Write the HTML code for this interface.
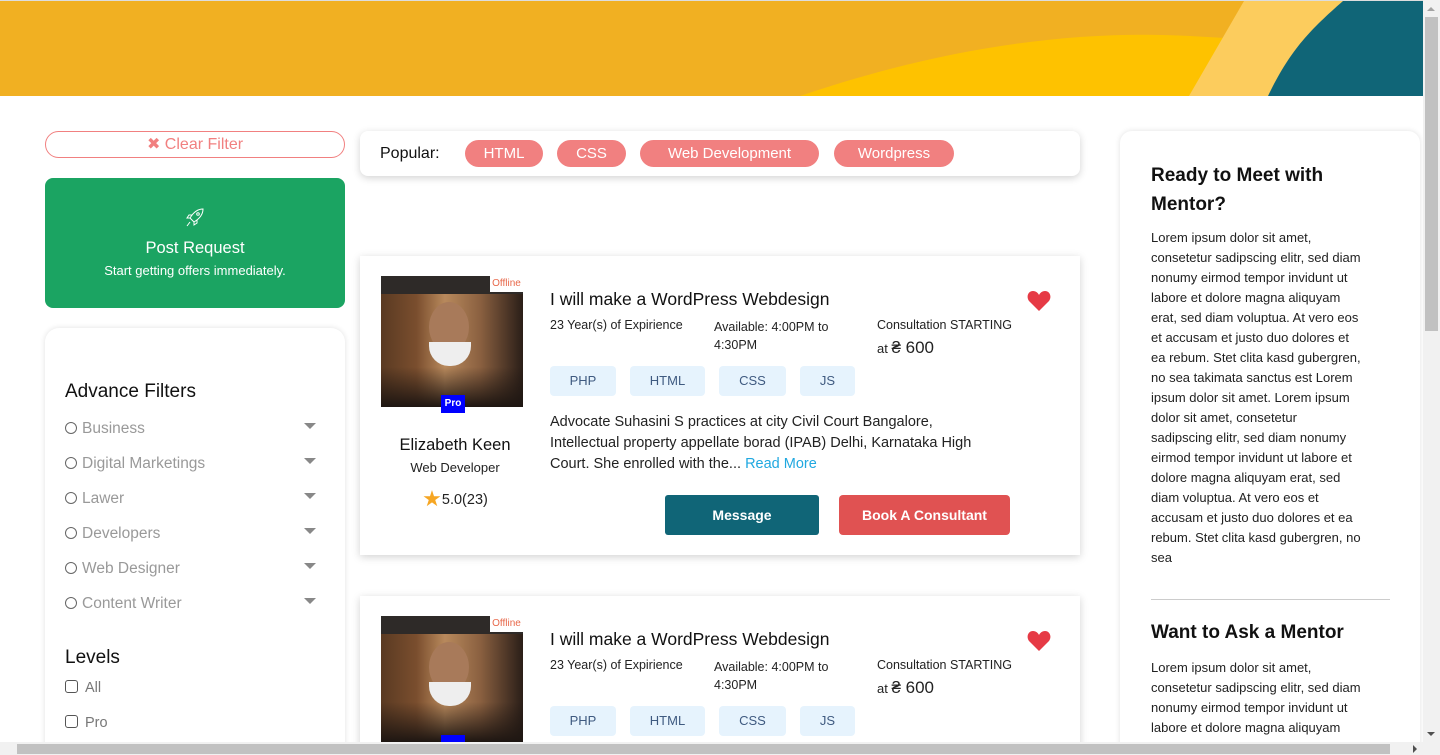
<!DOCTYPE html>
<html style="overflow:hidden;width:1440px;height:755px"><head><meta charset="utf-8"><style>
*{margin:0;padding:0;box-sizing:border-box}
html,body{overflow:hidden}
body{width:1440px;height:755px;background:#fff;font-family:"Liberation Sans",sans-serif;color:#222;position:relative}
#w{position:absolute;left:0;top:0;width:1440px;height:755px;overflow:hidden}
.a{position:absolute;white-space:nowrap}
.sb{position:absolute;z-index:50}
.card{position:absolute;background:#fff;box-shadow:0 2px 8px rgba(0,0,0,.18)}
.tag{position:absolute;background:#f18080;color:#fff;border-radius:14px;height:27px;line-height:27px;font-size:15px;text-align:center}
.sk{position:absolute;background:#e6f3fd;color:#3f5a80;border-radius:4px;height:30px;line-height:30px;font-size:13px;text-align:center}
.fl{position:absolute;left:65px;font-size:15.5px;color:#999;white-space:nowrap}
.fl i{display:inline-block;width:12px;height:12px;border:1px solid #666;border-radius:50%;margin-right:5px;vertical-align:-1px}
.car{position:absolute;left:304px;width:0;height:0;border-left:6px solid transparent;border-right:6px solid transparent;border-top:6px solid #888}
.rt{position:absolute;left:1151px;font-size:13px;line-height:20px;color:#222;white-space:nowrap}
.photo{position:absolute;width:142px;height:131px;background:linear-gradient(90deg,#5a3a22 0,#7a4e2e 25%,#b8895c 45%,#8a6040 70%,#2a1e18 100%);overflow:hidden}
.photo:before{content:"";position:absolute;left:0;top:0;width:100%;height:18px;background:#2e2a28}
.photo:after{content:"";position:absolute;left:0;bottom:0;width:100%;height:40px;background:linear-gradient(180deg,rgba(30,22,18,0),#1e1612)}
.face{position:absolute;left:48px;top:26px;width:40px;height:50px;border-radius:50%;background:#a87a5a}
.cup{position:absolute;left:48px;top:66px;width:42px;height:24px;background:#eee;border-radius:0 0 20px 20px;z-index:2}
</style></head><body><div id="w">
<svg class="a" style="left:0;top:0" width="1423" height="96" viewBox="0 0 1423 96">
<rect x="0" y="0" width="1423" height="96" fill="#f1b022"/>
<rect x="0" y="0" width="1423" height="1" fill="#ddd"/>
<path d="M800 96 C950 45 1080 30 1190 36 L1225 38 L1200 96 Z" fill="#fec200"/>
<path d="M1244 1 L1345 1 L1268 96 L1189 96 Z" fill="#fccc5d"/>
<path d="M1343 1 L1423 1 L1423 96 L1268 96 C1290 50 1310 30 1343 1 Z" fill="#106577"/>
</svg>
<div class="sb" style="left:1423px;top:0;width:17px;height:742px;background:#f1f1f1"></div>
<div class="sb" style="left:1425px;top:17px;width:13px;height:314px;background:#c1c1c1"></div>
<div class="sb" style="left:1427px;top:7px;border-left:4px solid transparent;border-right:4px solid transparent;border-bottom:4px solid #a3a3a3"></div>
<div class="sb" style="left:1427px;top:732px;border-left:4px solid transparent;border-right:4px solid transparent;border-top:4px solid #505050"></div>
<div class="sb" style="left:0;top:742px;width:1440px;height:13px;background:#f1f1f1"></div>
<div class="sb" style="left:17px;top:744px;width:1373px;height:10px;background:#c1c1c1"></div>
<div class="sb" style="left:1413px;top:745px;border-top:4px solid transparent;border-bottom:4px solid transparent;border-left:4px solid #505050"></div>

<div class="a" style="left:45px;top:131px;width:300px;height:27px;border:1px solid #f18080;border-radius:14px;color:#f18080;font-size:16px;text-align:center;line-height:25px">✖ Clear Filter</div>
<div class="a" style="left:45px;top:178px;width:300px;height:130px;background:#1ba462;border-radius:8px;color:#fff;text-align:center">
<svg style="position:absolute;left:138px;top:28px" width="24" height="24" viewBox="0 0 24 24" fill="none" stroke="#fff" stroke-width="1"><path d="M20 3 C14 3 10 7 7 12 L11 16 C16 13 20 9 20 3Z M7 12 L4 12 L6 9 L9 9 M11 16 L11 19 L14 17 L14 14 M7 16 L4 20"/><circle cx="15" cy="8" r="1.3"/></svg>
<div style="position:absolute;top:61px;width:100%;font-size:16.5px">Post Request</div>
<div style="position:absolute;top:85px;width:100%;font-size:13px">Start getting offers immediately.</div>
</div>
<div class="card" style="left:45px;top:328px;width:300px;height:427px;border-radius:14px 14px 0 0;box-shadow:0 0 6px rgba(0,0,0,.12)"></div>
<div class="a" style="left:65px;top:381px;font-size:19px;color:#111">Advance Filters</div>
<div class="fl" style="top:420px"><i></i>Business</div><div class="car" style="top:423px"></div>
<div class="fl" style="top:455px"><i></i>Digital Marketings</div><div class="car" style="top:458px"></div>
<div class="fl" style="top:490px"><i></i>Lawer</div><div class="car" style="top:493px"></div>
<div class="fl" style="top:525px"><i></i>Developers</div><div class="car" style="top:528px"></div>
<div class="fl" style="top:560px"><i></i>Web Designer</div><div class="car" style="top:563px"></div>
<div class="fl" style="top:595px"><i></i>Content Writer</div><div class="car" style="top:598px"></div>
<div class="a" style="left:65px;top:647px;font-size:19px;color:#111">Levels</div>
<div class="a" style="left:65px;top:680px;font-size:14.5px;color:#777"><span style="display:inline-block;width:13px;height:13px;border:1px solid #555;border-radius:3px;margin-right:7px;vertical-align:-1px"></span>All</div>
<div class="a" style="left:65px;top:715px;font-size:14.5px;color:#777"><span style="display:inline-block;width:13px;height:13px;border:1px solid #555;border-radius:3px;margin-right:7px;vertical-align:-1px"></span>Pro</div>

<div class="card" style="left:360px;top:131px;width:720px;height:45px;border-radius:8px"></div>
<div class="a" style="left:380px;top:145px;font-size:16px;color:#111">Popular:</div>
<div class="tag" style="left:465px;top:140px;width:78px">HTML</div>
<div class="tag" style="left:557px;top:140px;width:69px">CSS</div>
<div class="tag" style="left:640px;top:140px;width:179px">Web Development</div>
<div class="tag" style="left:834px;top:140px;width:120px">Wordpress</div>

<div class="card" style="left:360px;top:256px;width:720px;height:299px"></div>
<div class="photo" style="left:381px;top:276px"><div class="face"></div><div class="cup"></div></div>
<div class="a" style="left:490px;top:276px;width:33px;height:16px;background:#fff;color:#e8684a;font-size:10px;text-align:center;line-height:16px">Offline</div>
<div class="a" style="left:441px;top:395px;width:24px;height:18px;background:#0000ff;color:#fff;font-size:10px;font-weight:bold;text-align:center;line-height:18px;z-index:3">Pro</div>
<div class="a" style="left:381px;top:436px;width:148px;text-align:center;font-size:16.5px;color:#111">Elizabeth Keen</div>
<div class="a" style="left:381px;top:460px;width:148px;text-align:center;font-size:13px;color:#222">Web Developer</div>
<div class="a" style="left:381px;top:486px;width:148px;text-align:center;font-size:14.5px;color:#222"><span style="color:#f6a623;font-size:22px;vertical-align:-2px">★</span>5.0(23)</div>
<div class="a" style="left:550px;top:289px;font-size:17.5px;color:#111">I will make a WordPress Webdesign</div>
<div class="a" style="left:550px;top:318px;font-size:12.5px">23 Year(s) of Expirience</div>
<div class="a" style="left:714px;top:318px;font-size:12.5px;line-height:18px">Available: 4:00PM to<br>4:30PM</div>
<div class="a" style="left:877px;top:318px;font-size:12.5px">Consultation STARTING</div>
<div class="a" style="left:877px;top:338px;font-size:13px">at <span style="font-size:17px">₴ 600</span></div>
<svg class="a" style="left:1027px;top:290px" width="24" height="22" viewBox="0 0 24 22"><path d="M12 21 L2 11 C-1 7 1 1 6 1 C9 1 11 3 12 5 C13 3 15 1 18 1 C23 1 25 7 22 11 Z" fill="#e63a45"/></svg>
<div class="sk" style="left:550px;top:366px;width:66px">PHP</div>
<div class="sk" style="left:630px;top:366px;width:75px">HTML</div>
<div class="sk" style="left:719px;top:366px;width:67px">CSS</div>
<div class="sk" style="left:800px;top:366px;width:55px">JS</div>
<div class="a" style="left:550px;top:412px;font-size:14.5px;line-height:21px;color:#222">Advocate Suhasini S practices at city Civil Court Bangalore,<br>Intellectual property appellate borad (IPAB) Delhi, Karnataka High<br>Court. She enrolled with the... <span style="color:#20a8e0">Read More</span></div>
<div class="a" style="left:665px;top:495px;width:154px;height:40px;background:#106577;color:#fff;border-radius:3px;text-align:center;line-height:40px;font-size:14px;font-weight:bold">Message</div>
<div class="a" style="left:839px;top:495px;width:171px;height:40px;background:#e05252;color:#fff;border-radius:4px;text-align:center;line-height:40px;font-size:14px;font-weight:bold">Book A Consultant</div>

<div class="card" style="left:360px;top:596px;width:720px;height:159px"></div>
<div class="photo" style="left:381px;top:616px;height:126px"><div class="face"></div><div class="cup"></div></div>
<div class="a" style="left:490px;top:616px;width:33px;height:16px;background:#fff;color:#e8684a;font-size:10px;text-align:center;line-height:16px">Offline</div>
<div class="a" style="left:441px;top:735px;width:24px;height:7px;background:#0000ff;z-index:3"></div>
<div class="a" style="left:550px;top:629px;font-size:17.5px;color:#111">I will make a WordPress Webdesign</div>
<div class="a" style="left:550px;top:658px;font-size:12.5px">23 Year(s) of Expirience</div>
<div class="a" style="left:714px;top:658px;font-size:12.5px;line-height:18px">Available: 4:00PM to<br>4:30PM</div>
<div class="a" style="left:877px;top:658px;font-size:12.5px">Consultation STARTING</div>
<div class="a" style="left:877px;top:678px;font-size:13px">at <span style="font-size:17px">₴ 600</span></div>
<svg class="a" style="left:1027px;top:630px" width="24" height="22" viewBox="0 0 24 22"><path d="M12 21 L2 11 C-1 7 1 1 6 1 C9 1 11 3 12 5 C13 3 15 1 18 1 C23 1 25 7 22 11 Z" fill="#e63a45"/></svg>
<div class="sk" style="left:550px;top:706px;width:66px">PHP</div>
<div class="sk" style="left:630px;top:706px;width:75px">HTML</div>
<div class="sk" style="left:719px;top:706px;width:67px">CSS</div>
<div class="sk" style="left:800px;top:706px;width:55px">JS</div>

<div class="card" style="left:1120px;top:131px;width:300px;height:624px;border-radius:12px 12px 0 0;box-shadow:0 0 6px rgba(0,0,0,.12)"></div>
<div class="a" style="left:1151px;top:161px;font-size:19px;font-weight:bold;line-height:29px;color:#111">Ready to Meet with<br>Mentor?</div>
<div class="rt" style="top:228px">Lorem ipsum dolor sit amet,<br>consetetur sadipscing elitr, sed diam<br>nonumy eirmod tempor invidunt ut<br>labore et dolore magna aliquyam<br>erat, sed diam voluptua. At vero eos<br>et accusam et justo duo dolores et<br>ea rebum. Stet clita kasd gubergren,<br>no sea takimata sanctus est Lorem<br>ipsum dolor sit amet. Lorem ipsum<br>dolor sit amet, consetetur<br>sadipscing elitr, sed diam nonumy<br>eirmod tempor invidunt ut labore et<br>dolore magna aliquyam erat, sed<br>diam voluptua. At vero eos et<br>accusam et justo duo dolores et ea<br>rebum. Stet clita kasd gubergren, no<br>sea</div>
<div class="a" style="left:1151px;top:599px;width:239px;height:1px;background:#ccc"></div>
<div class="a" style="left:1151px;top:622px;font-size:19px;font-weight:bold;color:#111">Want to Ask a Mentor</div>
<div class="rt" style="top:658px">Lorem ipsum dolor sit amet,<br>consetetur sadipscing elitr, sed diam<br>nonumy eirmod tempor invidunt ut<br>labore et dolore magna aliquyam</div>
</div></body></html>
